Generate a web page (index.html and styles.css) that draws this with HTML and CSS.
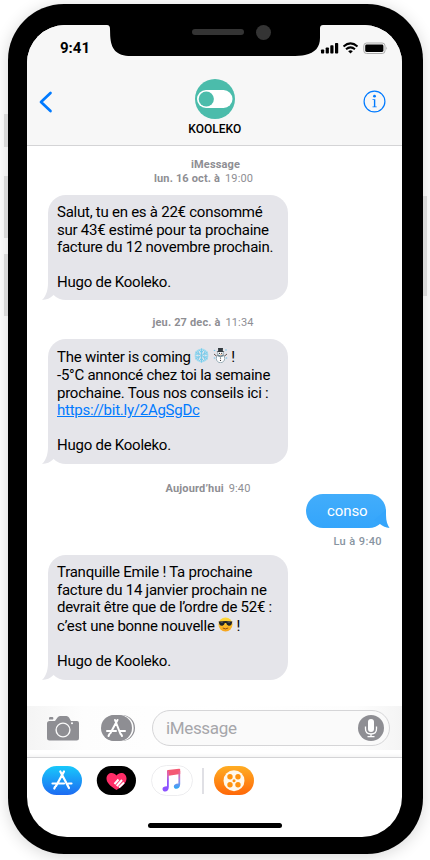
FILE: index.html
```html
<!DOCTYPE html>
<html lang="fr">
<head>
<meta charset="utf-8">
<title>Kooleko</title>
<link rel="stylesheet" href="styles.css">
</head>
<body>
<div class="phone">
  <i class="key mute"></i><i class="key up"></i><i class="key down"></i><i class="key power"></i>
  <div class="screen">
    <svg class="notch" width="216" height="31" viewBox="0 0 216 31"><path d="M0 0H216Q213.200 0 213 3V13C213 22 208 28 198 30Q193 31 184 31H24C9 31 4 24 3.200 11L3 4Q3 0 0 0Z"/><rect x="85" y="4" width="52" height="6" rx="3" fill="#343434"/><circle cx="156.500" cy="7.500" r="7.500" fill="#343434"/></svg>
    <header class="header">
      <div class="status">
        <span class="clock">9:41</span>
        <svg class="signals" width="68" height="14" viewBox="0 0 68 14">
          <rect x="1" y="8.500" width="3.200" height="4" rx=".8"/><rect x="5.700" y="6.500" width="3.200" height="6" rx=".8"/><rect x="10.300" y="4.200" width="3.200" height="8.300" rx=".8"/><rect x="15" y="2" width="3.200" height="10.500" rx=".8"/>
          <g fill="none" stroke="#000" stroke-width="2"><path d="M23.500 5.500Q30.500-.800 37.500 5.500M26 8.300Q30.500 4.400 35 8.300"/></g><path d="M28.200 10.200Q30.500 8.400 32.800 10.200L30.500 12.500Z"/>
          <rect x="43.800" y="2" width="21.200" height="10.500" rx="2.800" fill="none" stroke="#aaa"/><rect x="45.200" y="3.500" width="18.200" height="7.500" rx="1.400"/><path d="M66.300 5.500Q68 7.200 66.300 9Z" fill="#aaa"/>
        </svg>
      </div>
      <div class="contact">
        <svg class="back" width="14" height="22" viewBox="0 0 14 22" fill="none" stroke="#007aff" stroke-width="2.700" stroke-linecap="round" stroke-linejoin="round"><path d="M11.500 2L2 11L11.500 20"/></svg>
        <div class="person">
          <svg width="40" height="40" viewBox="0 0 40 40"><circle cx="20" cy="20" r="20" fill="#4bbcab"/><rect x="2" y="11" width="35.500" height="18" rx="9" fill="#fff"/><circle cx="11.300" cy="20" r="7.600" fill="#4bbcab"/></svg>
          <span>KOOLEKO</span>
        </div>
        <svg class="info" width="23" height="23" viewBox="0 0 23 23"><circle cx="11.500" cy="11.500" r="10.400" fill="none" stroke="#007aff" stroke-width="1.200"/><circle cx="11.500" cy="6.200" r="1.400" fill="#007aff"/><path d="M9.500 9.300H12.300V16.500H13.700V17.300H9.500V16.500H10.900V10.100H9.500Z" fill="#007aff"/></svg>
      </div>
    </header>

    <main class="thread">
      <div class="stamp first"><b class="service">iMessage</b><p><b>lun. 16 oct. à</b> <span>19:00</span></p></div>
      <div class="bubble short">
        <p>Salut, tu en es à 22€ consommé</p><p>sur 43€ estimé pour ta prochaine</p><p>facture du 12 novembre prochain.</p><p>&nbsp;</p><p>Hugo de Kooleko.</p>
        <svg class="tail" width="18" height="22" viewBox="0 0 18 22"><path d="M6 0V5C6 12 4 18 0 22Q7 21.600 11 17.500L16 12Z"/></svg>
      </div>
      <div class="stamp second"><p><b>jeu. 27 dec. à</b> <span>11:34</span></p></div>
      <div class="bubble">
        <p class="pictured">The winter is coming
          <svg width="15" height="15" viewBox="0 0 15 15" fill="none" stroke="#78cbea" stroke-linecap="round"><circle cx="7.500" cy="7.500" r="6" stroke="#a5dcf0" stroke-width="1.800" stroke-dasharray="2 1.100"/><circle cx="7.500" cy="7.500" r="3" stroke="#a5dcf0"/><path stroke-width="1" d="M7.500 .8V14.200M1.700 4.200L13.300 10.800M1.700 10.800L13.300 4.200M5.500 2.500L7.500 4.500L9.500 2.500M5.500 12.500L7.500 10.500L9.500 12.500M2 6.200L4.800 6L4 3.200M11 11.800L10.200 9L13 8.800M2 8.800L4.800 9L4 11.800M11 3.200L10.200 6L13 6.200"/></svg>
          <svg width="15" height="15" viewBox="0 0 15 15"><path d="M1 6L4 8.500M14 6L11 8.500" stroke="#65534c" stroke-width="1"/><circle cx="7.500" cy="10.500" r="4.200" fill="#fff" stroke="#8da5b0" stroke-width=".9"/><circle cx="7.500" cy="5.500" r="3.200" fill="#f6fafb" stroke="#80969f" stroke-width=".8"/><path d="M5 0H10L9.800 3L11.500 4H3.500L5.200 3Z" fill="#343b40"/><path d="M4.600 7.200Q7.500 9 10.400 7.200" stroke="#6f8791" stroke-width="1.400" fill="none"/><g fill="#222"><circle cx="6.400" cy="5.300" r=".6"/><circle cx="8.700" cy="5.300" r=".6"/><circle cx="7.500" cy="10" r=".6"/><circle cx="7.500" cy="12.300" r=".6"/></g><path d="M7.300 6H9L7.500 6.700" fill="#f06b20"/><g fill="#7ec9eb"><circle cx="1.500" cy="2.500" r=".8"/><circle cx="13" cy="2" r=".8"/><circle cx="1.500" cy="10" r=".8"/><circle cx="13.500" cy="10" r=".8"/></g></svg> !</p><p>-5°C annoncé chez toi la semaine</p><p>prochaine. Tous nos conseils ici :</p><p><a>https://bit.ly/2AgSgDc</a></p><p>&nbsp;</p><p>Hugo de Kooleko.</p>
        <svg class="tail" width="18" height="22" viewBox="0 0 18 22"><path d="M6 0V5C6 12 4 18 0 22Q7 21.600 11 17.500L16 12Z"/></svg>
      </div>
      <div class="stamp today"><p><b>Aujourd’hui</b> <span>9:40</span></p></div>
      <div class="sent">conso
        <svg class="sent-tail" width="16" height="20" viewBox="0 0 16 20"><path d="M0 12L12 2V7C12 13 13.500 17 15.500 20Q10 19.500 6 16Z"/></svg>
      </div>
      <p class="read">Lu à 9:40</p>
      <div class="bubble">
        <p>Tranquille Emile ! Ta prochaine</p><p>facture du 14 janvier prochain ne</p><p>devrait être que de l’ordre de 52€ :</p><p class="pictured">c’est une bonne nouvelle
          <svg width="15" height="15" viewBox="0 0 15 15"><defs><linearGradient id="face" x2="0" y2="1"><stop stop-color="#ffdc39"/><stop offset="1" stop-color="#f6a21b"/></linearGradient></defs><circle cx="7.500" cy="7.500" r="7" fill="url(#face)"/><path d="M.6 4.500Q7.500 3.600 14.400 4.500L13.500 7.500Q12.500 9 10.500 8.700Q8.600 8.300 8.200 6H6.800Q6.400 8.300 4.500 8.700Q2.500 9 1.500 7.500Z" fill="#212429"/><path d="M2.700 5.300L5 5.100M9.600 5.100L12 5.300" stroke="#667180" stroke-width=".7"/><path d="M4.800 11Q7.500 12.800 10.200 11" stroke="#935018" fill="none"/></svg> !</p><p>&nbsp;</p><p>Hugo de Kooleko.</p>
        <svg class="tail" width="18" height="22" viewBox="0 0 18 22"><path d="M6 0V5C6 12 4 18 0 22Q7 21.600 11 17.500L16 12Z"/></svg>
      </div>
    </main>

    <div class="composer">
      <svg class="camera" width="32" height="25" viewBox="0 0 32 25"><path d="M2.500 5H8L10.500 1.500Q11.500 0 13 0H19.500Q21 0 22 1.500L24 5H30Q32 5 32 7V22Q32 24.500 29.500 24.500H2.500Q0 24.500 0 22V7.500Q0 5 2.500 5Z"/><path d="M2 3.500V2.200Q2 1 3.200 1H5.300Q6.500 1 6.300 2.200L6 3.500Z"/><circle cx="16" cy="14" r="6.900" fill="none" stroke="#f9f9f9" stroke-width="1.400"/><circle cx="25" cy="7.200" r="1" fill="#fff"/></svg>
      <svg class="store" width="34" height="26" viewBox="0 0 34 26"><rect x="4" width="30" height="26" rx="13"/><rect x="2.700" width="30" height="26" rx="13" fill="#fdfdfd"/><rect x="1" width="30" height="26" rx="13"/><rect width="30" height="26" rx="13"/><g transform="translate(6 4)"><path d="M8 1L13.500 15M10.500 1L3.500 14M0 12H9M13 12H18M2.500 15L1.500 17M14 15L15 17" stroke="#fff" stroke-width="2" stroke-linecap="round"/></g></svg>
      <div class="field"><span>iMessage</span>
        <svg width="26" height="26" viewBox="0 0 26 26"><circle cx="13" cy="13" r="13" fill="#8e8e93"/><rect x="10" y="4" width="6" height="13" rx="3" fill="#fff"/><path d="M7.500 11.500V14Q7.500 19 13 19T18.500 14V11.500M13 19V21.500M9.500 21.700H16.500" fill="none" stroke="#fff" stroke-width="1.300"/></svg>
      </div>
    </div>
    <nav class="apps">
      <svg width="40" height="29" viewBox="0 0 40 29"><defs><linearGradient id="blue" x2="0" y2="1"><stop stop-color="#18c8fb"/><stop offset="1" stop-color="#1d6bf2"/></linearGradient></defs><rect width="40" height="29" rx="14.500" fill="url(#blue)"/><path d="M18.300 5.500L27 22M22 5.500L14 20M10.500 17.500H22M26.500 17.500H29.500M13 21L12.300 22.500" stroke="#fff" stroke-width="2.200" stroke-linecap="round"/></svg>
      <svg width="40" height="29" viewBox="0 0 40 29"><rect x=".8" width="39.200" height="29" rx="14.500"/><path d="M20.500 24C14 20 10.500 16.500 10.500 12.500C10.500 6.500 17.500 5 20.500 9.500C23.500 5 30.500 6.500 30.500 12.500C30.500 16.500 27 20 20.500 24Z" fill="#ff2d67"/><path d="M18.500 18L22.500 13.500M20.700 20L26 14M23 21.500L28 16.500" stroke="#fff" stroke-width="2"/></svg>
      <svg class="music" width="42" height="31" viewBox="0 0 42 31"><defs><linearGradient id="tune" x2=".35" y2="1"><stop stop-color="#ff4e6b"/><stop offset=".45" stop-color="#d666bd"/><stop offset=".72" stop-color="#8c52ff"/></linearGradient><linearGradient id="tune2" x2="0" y2="1"><stop stop-color="#f45b83"/><stop offset=".5" stop-color="#a384e7"/><stop offset="1" stop-color="#25a9f8"/></linearGradient></defs><rect x=".5" y=".5" width="41" height="30" rx="15" fill="#fff" stroke="#ededef"/><path d="M16 6Q16 5.300 17 5.100L28 3.700Q29.200 3.500 29.200 4.500V9L16 11Z" fill="#f45973"/><path d="M16 6H17.800V22C17.800 28 11.500 27.500 11.500 24Q11.500 21.500 16 21.300Z" fill="url(#tune)"/><path d="M27.400 6H29.200V19C29.200 25 22.800 25 22.800 21.500Q22.800 19 27.400 18.600Z" fill="url(#tune2)"/></svg>
      <i class="divider"></i>
      <svg width="40" height="29" viewBox="0 0 40 29"><defs><linearGradient id="orange" x2="0" y2="1"><stop stop-color="#ffad23"/><stop offset="1" stop-color="#ff6808"/></linearGradient></defs><rect width="40" height="29" rx="14.500" fill="url(#orange)"/><circle cx="20" cy="14.700" r="10.500" fill="#fff8ec"/><g fill="#ff930f"><circle cx="16" cy="10.700" r="2.700"/><circle cx="24" cy="10.700" r="2.700"/><circle cx="16" cy="18.700" r="2.700"/><circle cx="24" cy="18.700" r="2.700"/><circle cx="20" cy="14.700" r="1.500"/></g></svg>
    </nav>
    <i class="home"></i>
  </div>
</div>
</body>
</html>
```
FILE: styles.css
```css
* { box-sizing: border-box; }
body { margin: 0; height: 860px; overflow: hidden; background: #fff; font-family: Roboto, sans-serif; color: #000; }
p { margin: 0; }
svg { display: block; flex: none; }
.phone { position: relative; width: 415px; height: 850px; margin: 4px 0 0 8px; padding: 21px 21px 17px 19px; background: #000; border-radius: 56px; box-shadow: 0 2px 16px rgba(0,0,0,.16); }
.key { position: absolute; left: -4px; width: 4px; background: #d8d8d8; }
.mute { top: 110px; height: 33px; }
.up { top: 172px; height: 62px; }
.down { top: 250px; height: 62px; }
.power { left: 415px; top: 192px; height: 100px; }
.screen { position: relative; width: 375px; height: 812px; overflow: hidden; border-radius: 38px 38px 40px 40px; background: #fff; display: flex; flex-direction: column; }
.notch { position: absolute; left: 80px; top: 0; }
.header { height: 121px; background: #f7f7f7; border-bottom: 1px solid #d4d4d6; flex: none; }
.status { height: 44px; padding: 15px 14.5px 0 33px; display: flex; justify-content: space-between; align-items: flex-start; }
.clock { font-size: 15px; font-weight: 700; line-height: 17px; }
.signals { margin-top: 1px; }
.contact { display: flex; justify-content: space-between; align-items: flex-start; padding: 10px 16px 0 12px; }
.back { margin-top: 12px; }
.person { display: flex; flex-direction: column; align-items: center; margin-left: 13.500px; font-size: 12px; font-weight: 500; line-height: 14px; gap: 3px; }
.info { margin-top: 11px; }
.thread { height: 560px; padding: 12px 14px 0 21px; display: flex; flex-direction: column; align-items: flex-start; }
.stamp { color: #8e8e93; font-size: 11px; line-height: 14px; letter-spacing: .15px; flex: none; }
.stamp span { margin-left: 2px; }
.first { margin-left: 106px; height: 37px; }
.first .service { display: block; margin-left: 37px; }
.second { margin-left: 104.5px; margin-top: 16px; height: 23px; }
.today { margin-left: 117.5px; margin-top: 18px; height: 12px; }
.bubble { position: relative; isolation: isolate; flex: none; width: 240px; height: 125px; padding: 9px 0 0 9px; background: #e5e5ea; border-radius: 18px; font-size: 15px; line-height: 17.4px; letter-spacing: -.25px; white-space: nowrap; }
.short { height: 105px; }
.bubble p { height: 17.5px; }
.bubble .pictured { height: 19.400px; line-height: 19px; }
.pictured svg { display: inline-block; vertical-align: -1px; }
.bubble a { color: #007aff; text-decoration: underline; }
.tail { position: absolute; z-index: -1; left: -6px; bottom: 0; fill: #e5e5ea; }
.sent { position: relative; isolation: isolate; flex: none; align-self: flex-end; margin-right: 2px; width: 80px; height: 34px; padding-left: 21px; border-radius: 17px; background: linear-gradient(#42adfb, #34a5fb); color: #fff; font-size: 15px; line-height: 34px; letter-spacing: -.1px; }
.sent-tail { position: absolute; z-index: -1; right: -4px; bottom: 0; fill: #35a5fb; }
.read { align-self: flex-end; margin: 7px 6px 6px 0; color: #8794a1; font-size: 11px; font-weight: 500; letter-spacing: .4px; line-height: 14px; }
.composer { height: 44px; padding: 0 12px 0 20px; display: flex; align-items: center; background: linear-gradient(90deg, #f4f4f4, #fdfdfd 15%, #fff 50%, #fdfdfd 88%, #f4f4f4); }
.camera, .store { fill: #8e8e93; }
.store { margin-left: 22px; }
.field { width: 238px; height: 36px; margin-left: 17px; padding: 0 5px 0 13px; border: 1px solid #d5d5d7; border-radius: 18px; background: #fafafa; display: flex; align-items: center; justify-content: space-between; color: #a6a6aa; font-size: 17px; letter-spacing: -.35px; }
.apps { margin-top: 7px; border-top: 1px solid #d4d4d6; height: 46px; padding: 0 15px; display: flex; align-items: center; gap: 14px; box-shadow: 0 -2px 3px rgba(0,0,0,.04); }
.music { margin: 0 -1px 0 1px; }
.divider { width: 2px; height: 26px; background: #e0e0e5; margin: 0 -4px; }
.home { width: 134px; height: 5px; margin: 20px auto 0; border-radius: 3px; background: #000; }
```
